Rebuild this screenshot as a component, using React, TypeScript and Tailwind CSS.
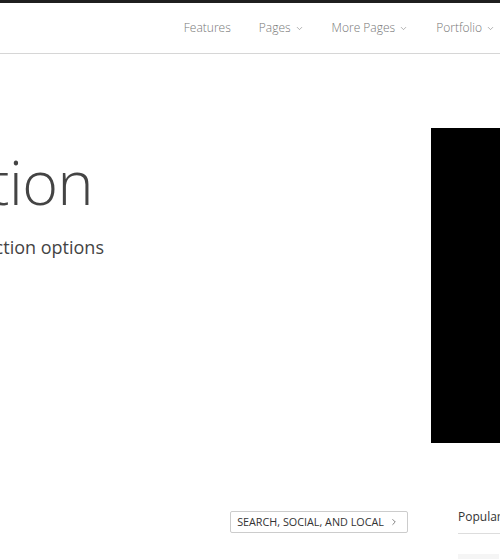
import { ChevronDown, ChevronRight } from 'lucide-react';

const font = { fontFamily: '"Open Sans", "Noto Sans", sans-serif' };

function NavItem({ label, dropdown }: { label: string; dropdown?: boolean }) {
  return (
    <a className="flex items-center gap-[4px] text-[12px] font-light text-[#777]">
      {label}
      {dropdown && <ChevronDown className="h-[9px] w-[9px] mt-[1px]" strokeWidth={1.5} />}
    </a>
  );
}

export default function App() {
  return (
    <div className="w-[500px] h-[559px] overflow-hidden bg-white" style={font}>
      {/* barra superior */}
      <div className="h-[3px] bg-[#1f1f1f]" />

      {/* navegación */}
      <nav className="h-[51px] border-b border-[#d6d6d6] flex items-center justify-end gap-[28px] pr-[5px]">
        <NavItem label="Features" />
        <NavItem label="Pages" dropdown />
        <NavItem label="More Pages" dropdown />
        <NavItem label="Portfolio" dropdown />
      </nav>

      {/* hero */}
      <div className="flex h-[389px]">
        <div className="flex-1 pt-[97px]">
          <div className="w-[93px] flex justify-end">
            <h1 className="whitespace-nowrap text-[61px] leading-none font-light text-[#444] tracking-[-0.5px]">
              Presentation
            </h1>
          </div>
          <div className="w-[104px] flex justify-end mt-[26px]">
            <p className="whitespace-nowrap text-[18px] leading-none text-[#444]">
              Multiple interaction options
            </p>
          </div>
        </div>
        <div className="w-[69px] shrink-0 mt-[74px] h-[315px] bg-black" />
      </div>

      {/* fila inferior */}
      <div className="flex items-start mt-[66px]">
        <div className="w-[458px] shrink-0 flex justify-end pr-[50px] pt-[2px]">
          <button className="h-[22px] pl-[6px] pr-[8px] flex items-center gap-[5px] border border-[#ccc] rounded-[2px] text-[10.8px] text-[#333] uppercase">
            Search, Social, and Local
            <ChevronRight className="h-[10px] w-[10px]" strokeWidth={1.5} />
          </button>
        </div>
        <div className="flex-1">
          <div className="text-[12px] leading-[16px] text-[#333] pb-[8px] border-b border-[#ddd] whitespace-nowrap">
            Popular
          </div>
          <div className="mt-[20px] mr-[3px] h-[10px] bg-[#f5f5f5]" />
        </div>
      </div>
    </div>
  );
}
